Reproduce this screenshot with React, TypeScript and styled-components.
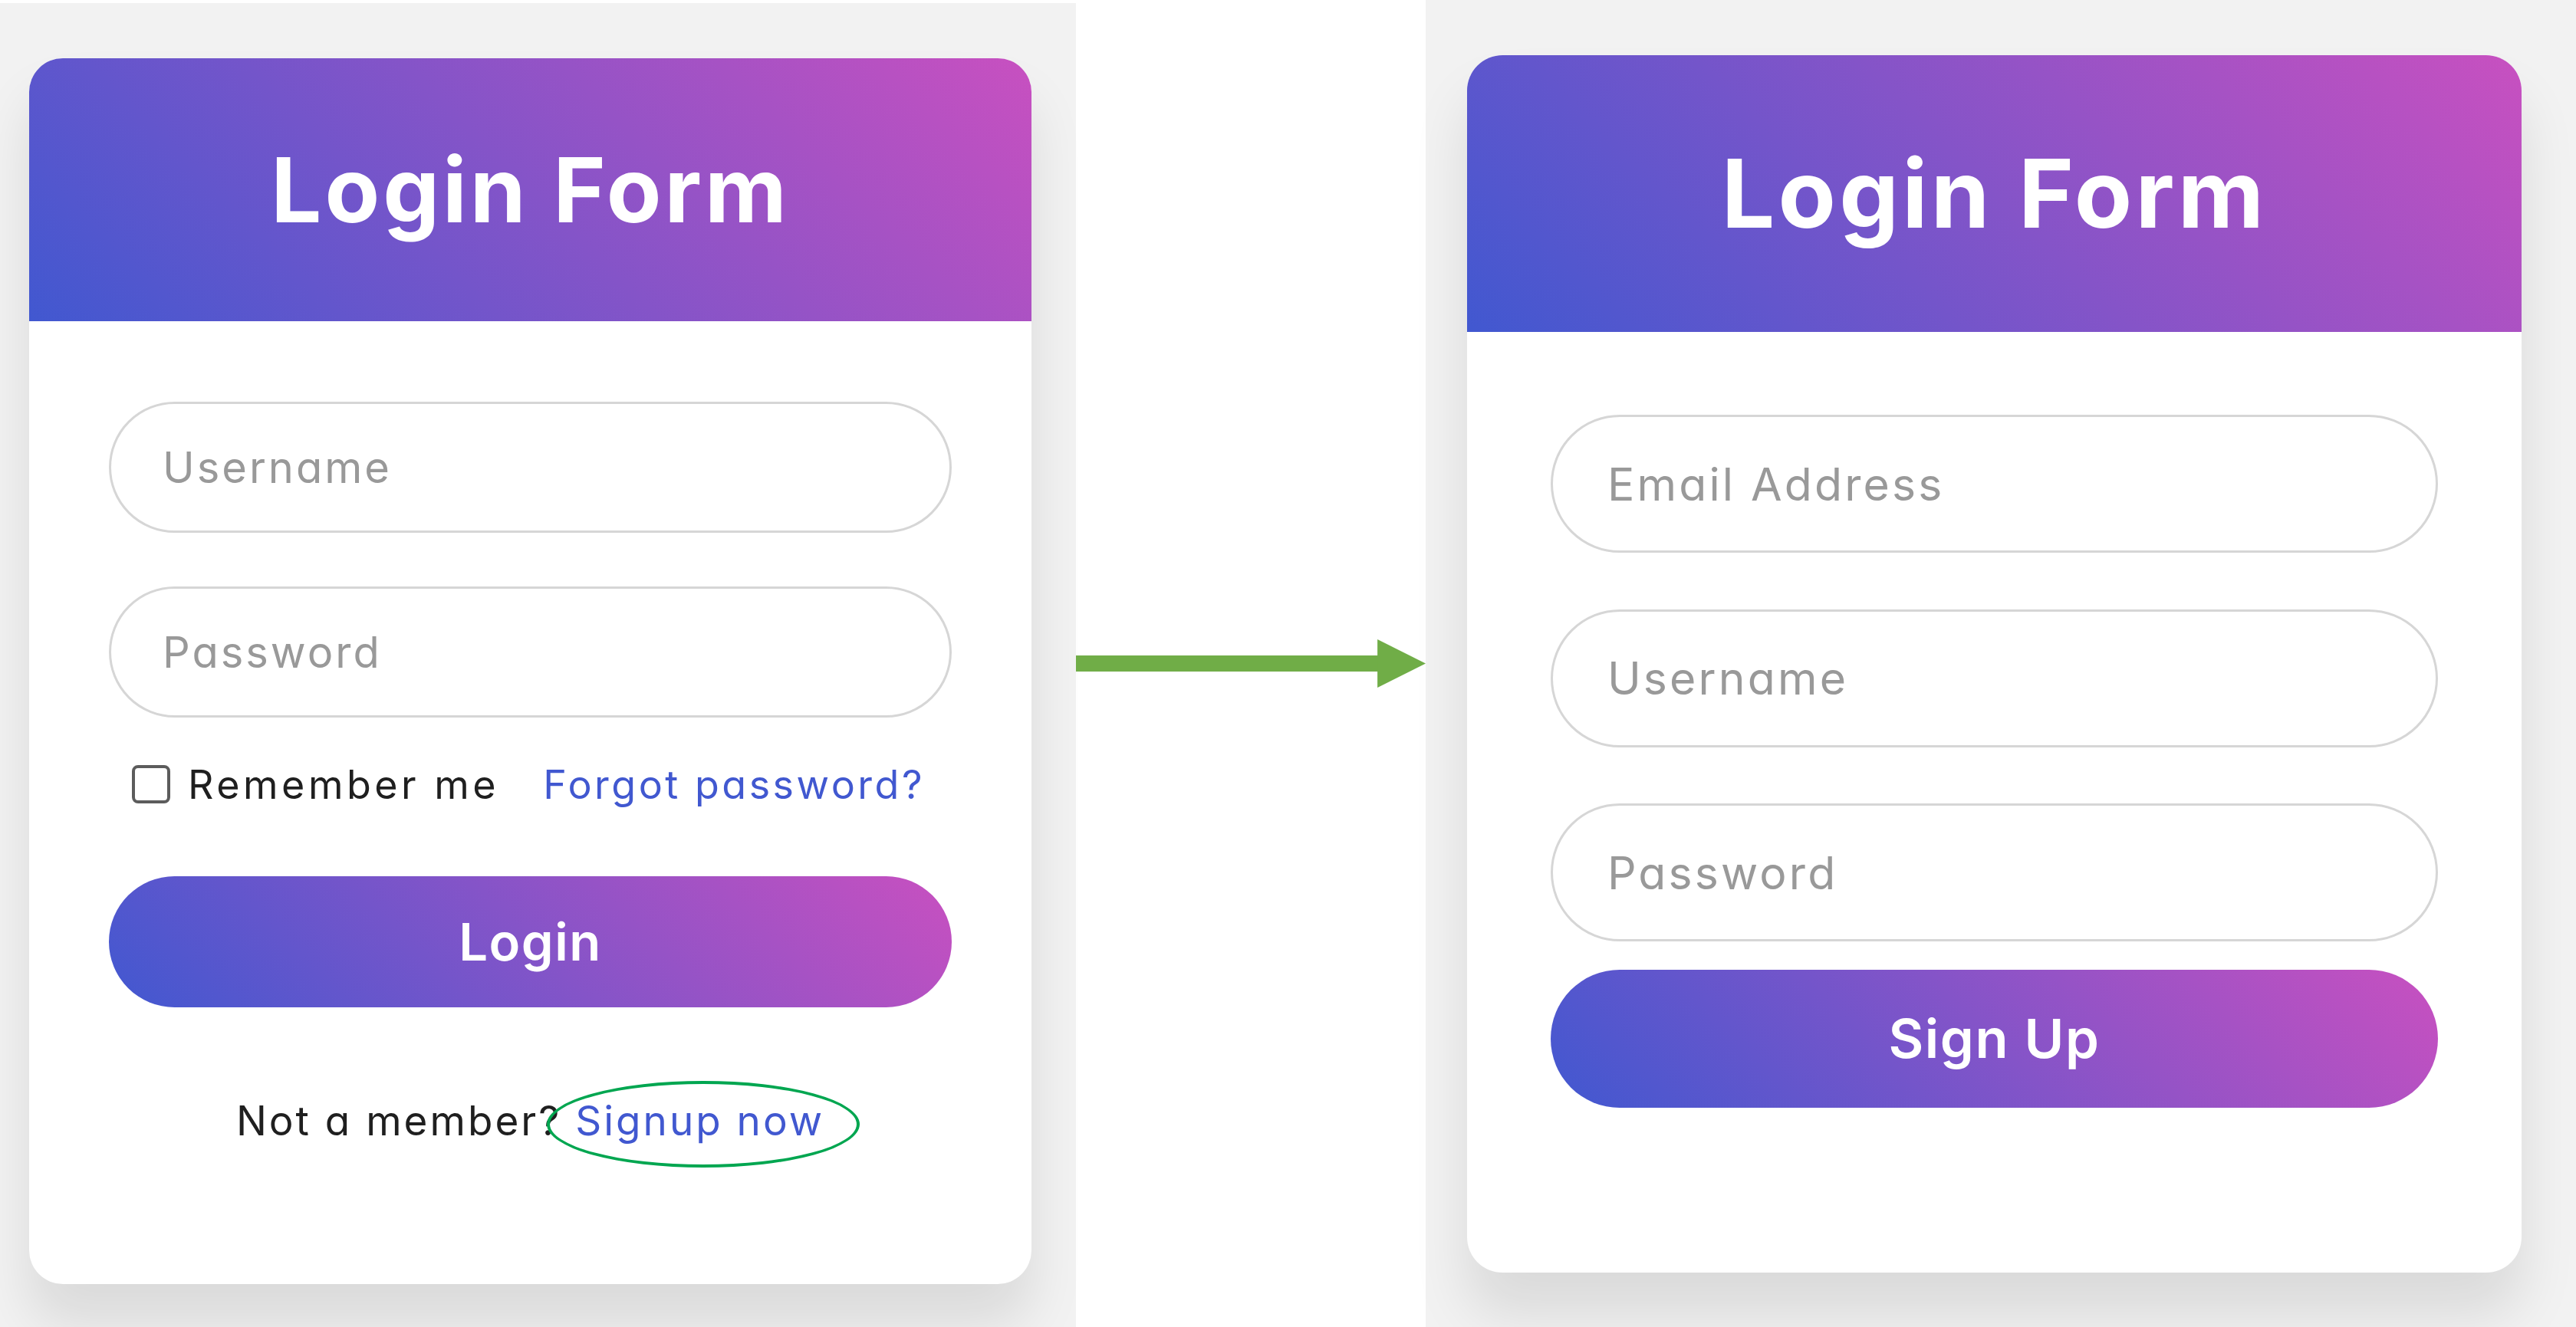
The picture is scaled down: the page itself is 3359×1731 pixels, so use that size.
import styled, { createGlobalStyle } from "styled-components"

const GlobalStyle = createGlobalStyle`
  * {
    box-sizing: border-box;
  }
  html, body {
    margin: 0;
    padding: 0;
    background: #fff;
  }
  body {
    font-family: Inter, "Noto Sans", sans-serif;
    font-feature-settings: "cv11" 1;
  }
`

const brandGradient = "linear-gradient(-135deg, #c850c0, #4158d0)"

const Page = styled.div`
  display: flex;
  width: 3359px;
  height: 1731px;
  overflow: hidden;
  background: #fff;
`

const Shot = styled.section<{ $width: number; $top: number; $left: number; $edge?: boolean }>`
  flex: none;
  width: ${p => p.$width}px;
  height: 100%;
  background: #f2f2f2;
  border-top: ${p => (p.$edge ? "4px solid #fff" : "none")};
  padding: ${p => p.$top}px 0 0 ${p => p.$left}px;
`

const Gap = styled.div`
  flex: none;
  width: 456px;
  height: 100%;
  display: flex;
  align-items: center;
`

const Card = styled.div<{ $zoom?: number }>`
  width: 1307px;
  background: #fff;
  border-radius: 44px;
  overflow: hidden;
  box-shadow: 0 52px 70px rgba(0, 0, 0, 0.1);
  zoom: ${p => p.$zoom ?? 1};
`

const Header = styled.header`
  height: 343px;
  display: flex;
  align-items: center;
  justify-content: center;
  background: ${brandGradient};
`

const Title = styled.h1`
  margin: 0;
  color: #fff;
  font-size: 117px;
  font-weight: 700;
  letter-spacing: 4px;
`

const Form = styled.form<{ $top: number; $bottom: number }>`
  display: flex;
  flex-direction: column;
  padding: ${p => p.$top}px 104px ${p => p.$bottom}px;
`

const Field = styled.input`
  width: 100%;
  height: 171px;
  border: 3px solid #d6d6d6;
  border-radius: 100px;
  padding: 0 0 0 67px;
  font-family: Inter, "Noto Sans", sans-serif;
  font-feature-settings: "cv11" 1;
  font-size: 56px;
  letter-spacing: 3px;
  color: #333;
  outline: none;
  background: #fff;

  & + & {
    margin-top: 70px;
  }

  &::placeholder {
    color: #999;
  }
`

const Options = styled.div`
  display: flex;
  align-items: center;
  justify-content: space-between;
  height: 50px;
  margin-top: 62px;
  padding: 0 35px 0 30px;
  font-size: 52px;
`

const Remember = styled.label`
  display: flex;
  align-items: center;
  gap: 23px;
  color: #1f1f1f;
  letter-spacing: 4.5px;
`

const Check = styled.input.attrs({ type: "checkbox" })`
  appearance: none;
  flex: none;
  width: 50px;
  height: 50px;
  margin: 0;
  border: 4px solid #5c5c5c;
  border-radius: 8px;
  background: #fff;
`

const TextLink = styled.a<{ $spacing?: number }>`
  position: relative;
  color: #4158d0;
  text-decoration: none;
  letter-spacing: ${p => (p.$spacing !== undefined ? `${p.$spacing}px` : "inherit")};
`

const Submit = styled.button<{ $gap: number }>`
  height: 171px;
  margin-top: ${p => p.$gap}px;
  border: none;
  border-radius: 100px;
  background: ${brandGradient};
  color: #fff;
  font-family: Inter, "Noto Sans", sans-serif;
  font-size: 67px;
  font-weight: 600;
  letter-spacing: 1.5px;
`

const Footer = styled.p`
  margin: 110px 0 0;
  text-align: center;
  font-size: 53px;
  line-height: 76px;
  letter-spacing: 3px;
  color: #1f1f1f;
`

// green annotation ring drawn round the signup link
const Ring = styled.span`
  position: absolute;
  left: -37px;
  right: -46px;
  top: -20px;
  bottom: -29px;
  border: 4px solid #00a650;
  border-radius: 50%;
  pointer-events: none;
`

const Arrow = () => (
  <svg width="457" height="63" viewBox="0 0 457 63">
    <rect x="0" y="21" width="395" height="21" fill="#70ad47" />
    <polygon points="394,0 457,31.5 394,63" fill="#70ad47" />
  </svg>
)

export default function App() {
  return (
    <Page>
      <GlobalStyle />
      <Shot $width={1403} $top={72} $left={38} $edge>
        <Card>
          <Header>
            <Title>Login Form</Title>
          </Header>
          <Form $top={105} $bottom={175} onSubmit={e => e.preventDefault()}>
            <Field type="text" placeholder="Username" />
            <Field type="password" placeholder="Password" />
            <Options>
              <Remember>
                <Check />
                Remember me
              </Remember>
              <TextLink href="#" $spacing={3.5}>Forgot password?</TextLink>
            </Options>
            <Submit $gap={95}>Login</Submit>
            <Footer>
              Not a member?{" "}
              <TextLink href="#">
                Signup now
                <Ring />
              </TextLink>
            </Footer>
          </Form>
        </Card>
      </Shot>
      <Gap>
        <Arrow />
      </Gap>
      <Shot $width={1500} $top={72} $left={54}>
        <Card $zoom={1.052}>
          <Header>
            <Title>Login Form</Title>
          </Header>
          <Form $top={103} $bottom={205} onSubmit={e => e.preventDefault()}>
            <Field type="email" placeholder="Email Address" />
            <Field type="text" placeholder="Username" />
            <Field type="password" placeholder="Password" />
            <Submit $gap={35}>Sign Up</Submit>
          </Form>
        </Card>
      </Shot>
    </Page>
  )
}
